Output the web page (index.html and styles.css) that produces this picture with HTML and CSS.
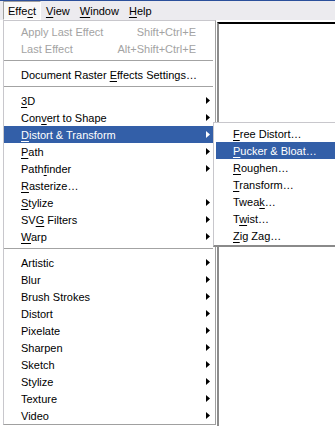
FILE: index.html
```html
<!DOCTYPE html>
<html>
<head>
<meta charset="utf-8">
<link rel="stylesheet" href="styles.css">
</head>
<body>
<div class="menubar">
  <span class="mb-item active">Effe<u>c</u>t</span>
  <span class="mb-item"><u>V</u>iew</span>
  <span class="mb-item"><u>W</u>indow</span>
  <span class="mb-item"><u>H</u>elp</span>
</div>
<div class="workspace">
  <div class="doc"></div>
</div>

<div class="menu main-menu">
  <div class="item disabled"><span class="label">Apply Last Effect</span><span class="key">Shift+Ctrl+E</span><span class="arrow"></span></div>
  <div class="item disabled"><span class="label">Last Effect</span><span class="key">Alt+Shift+Ctrl+E</span><span class="arrow"></span></div>
  <div class="sep"></div>
  <div class="item"><span class="label">Document Raster <u>E</u>ffects Settings…</span><span class="arrow"></span></div>
  <div class="sep"></div>
  <div class="item"><span class="label"><u>3</u>D</span><span class="arrow has"></span></div>
  <div class="item"><span class="label">Con<u>v</u>ert to Shape</span><span class="arrow has"></span></div>
  <div class="item hl"><span class="label"><u>D</u>istort &amp; Transform</span><span class="arrow has"></span></div>
  <div class="item"><span class="label"><u>P</u>ath</span><span class="arrow has"></span></div>
  <div class="item"><span class="label">Path<u>f</u>inder</span><span class="arrow has"></span></div>
  <div class="item"><span class="label"><u>R</u>asterize…</span><span class="arrow"></span></div>
  <div class="item"><span class="label"><u>S</u>tylize</span><span class="arrow has"></span></div>
  <div class="item"><span class="label">SV<u>G</u> Filters</span><span class="arrow has"></span></div>
  <div class="item"><span class="label"><u>W</u>arp</span><span class="arrow has"></span></div>
  <div class="sep"></div>
  <div class="item"><span class="label">Artistic</span><span class="arrow has"></span></div>
  <div class="item"><span class="label">Blur</span><span class="arrow has"></span></div>
  <div class="item"><span class="label">Brush Strokes</span><span class="arrow has"></span></div>
  <div class="item"><span class="label">Distort</span><span class="arrow has"></span></div>
  <div class="item"><span class="label">Pixelate</span><span class="arrow has"></span></div>
  <div class="item"><span class="label">Sharpen</span><span class="arrow has"></span></div>
  <div class="item"><span class="label">Sketch</span><span class="arrow has"></span></div>
  <div class="item"><span class="label">Stylize</span><span class="arrow has"></span></div>
  <div class="item"><span class="label">Texture</span><span class="arrow has"></span></div>
  <div class="item"><span class="label">Video</span><span class="arrow has"></span></div>
</div>

<div class="menu sub-menu">
  <div class="item"><span class="label"><u>F</u>ree Distort…</span></div>
  <div class="item hl"><span class="label"><u>P</u>ucker &amp; Bloat…</span></div>
  <div class="item"><span class="label"><u>R</u>oughen…</span></div>
  <div class="item"><span class="label"><u>T</u>ransform…</span></div>
  <div class="item"><span class="label">Twea<u>k</u>…</span></div>
  <div class="item"><span class="label">T<u>w</u>ist…</span></div>
  <div class="item"><span class="label"><u>Z</u>ig Zag…</span></div>
</div>
</body>
</html>
```
FILE: styles.css
```css
html, body {
  margin: 0;
  padding: 0;
  background: #ffffff;
  width: 335px;
  height: 426px;
  overflow: hidden;
}
body {
  position: relative;
  font-family: "Liberation Sans", Arial, sans-serif;
  font-size: 11px;
  color: #000;
}
u {
  text-decoration: underline;
  text-decoration-thickness: 1px;
  text-underline-offset: 2px;
}
.menubar {
  display: flex;
  align-items: stretch;
  height: 19px;
  border-top: 1px solid #2b4f9b;
  background: #ecebef;
  padding-left: 3px;
}
.mb-item {
  display: flex;
  align-items: center;
  padding: 0 4px;
  border: 1px solid transparent;
  height: 17px;
}
.mb-item.active {
  background: #f8f8f8;
  border-color: #a0a0a0 #ffffff #ffffff #a0a0a0;
}
.workspace {
  padding: 2px 0 0 217px;
}
.doc {
  height: 404px;
  border-top: 2px solid #000;
  border-left: 2px solid #8c8c8c;
  background: #fff;
}
.menu {
  position: absolute;
  background: #fff;
  border: 1px solid #b4b3b8;
  box-sizing: border-box;
}
.main-menu {
  left: 3px;
  top: 20px;
  width: 213px;
  height: 405px;
  padding: 2px 2px 0 0;
  border-color: #c8c7cc #a0a0a0 #a0a0a0 #c8c7cc;
}
.sub-menu {
  left: 213px;
  top: 122px;
  width: 122px;
  padding: 2px 0 1px 2px;
  border-color: #c8c7cc #8a8a8a #8a8a8a #c8c7cc;
  border-width: 1px 0 2px 1px;
}
.item {
  display: flex;
  align-items: center;
  height: 17px;
  padding-left: 17px;
  white-space: nowrap;
}
.item .label {
  flex: 1;
}
.item .key {
  flex: none;
}
.item.disabled {
  color: #a3a3a3;
}
.item.hl {
  background: #335fa8;
  color: #fff;
}
.arrow {
  flex: none;
  width: 17px;
  height: 17px;
  display: flex;
  align-items: center;
  padding-left: 10px;
  box-sizing: border-box;
}
.arrow.has::after {
  content: "";
  display: block;
  width: 4px;
  height: 7px;
  background: #000;
  clip-path: polygon(0 0, 100% 50%, 0 100%);
}
.item.hl .arrow.has::after {
  background: #fff;
}
.sep {
  height: 9px;
  display: flex;
  flex-direction: column;
  justify-content: flex-start;
  padding-top: 3px;
  box-sizing: border-box;
}
.sep::before {
  content: "";
  display: block;
  height: 1px;
  background: #a3a3a3;
}
```
